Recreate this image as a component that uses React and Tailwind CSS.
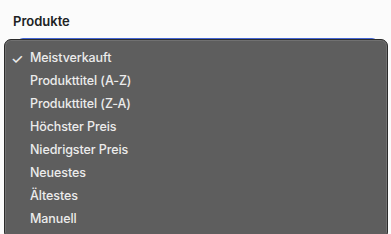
import React from "react";

const options = [
  "Meistverkauft",
  "Produkttitel (A-Z)",
  "Produkttitel (Z-A)",
  "Höchster Preis",
  "Niedrigster Preis",
  "Neuestes",
  "Ältestes",
  "Manuell",
];

export default function App() {
  const selected = 0;

  return (
    <div
      className="relative w-[391px] h-[234px] overflow-hidden bg-[#fbfbfb]"
      style={{ fontFamily: "Inter, 'Noto Sans', sans-serif" }}
    >
      <div className="px-[13px] pt-[13px]">
        <div className="text-[13px] font-semibold text-[#202223] leading-[16px]">Produkte</div>
        {/* select field behind the open menu */}
        <div className="mt-[9px] ml-[4px] h-[36px] rounded-[6px] border-t-2 border-[#4466d4] bg-white" />
        <div className="mt-[24px] h-px bg-[#d9d9d9]" />
        <div className="mt-[34px] h-px bg-[#e3e3e3]" />
        <div className="mt-[20px] h-px bg-[#e3e3e3]" />
        <div className="mt-[50px] h-px bg-[#d9d9d9]" />
      </div>

      {/* open native menu */}
      <div className="absolute left-[4px] top-[39px] w-[384px] h-[200px] rounded-[7px] border border-[#2b2b2b] bg-[#5e5e5e] shadow-[inset_0_0_0_1px_rgba(255,255,255,0.12)] pt-[7px]">
        {options.map((opt, i) => (
          <div
            key={opt}
            className="flex items-center h-[23px] text-[12.5px] font-medium tracking-[-0.1px] text-[#ececec]"
          >
            <span className="w-[25px] pl-[6px] text-[14px] leading-none">{i === selected ? "✓" : ""}</span>
            <span>{opt}</span>
          </div>
        ))}
      </div>
    </div>
  );
}
